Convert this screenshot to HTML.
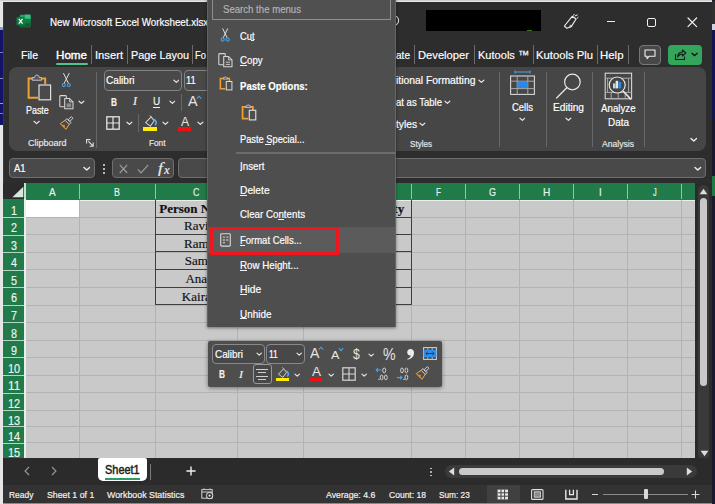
<!DOCTYPE html>
<html><head><meta charset="utf-8"><title>Excel</title>
<style>
html,body{margin:0;padding:0;}
body{width:715px;height:504px;overflow:hidden;position:relative;background:#2b2b2b;font-family:"Liberation Sans",sans-serif;}
#app{position:absolute;left:0;top:0;width:715px;height:504px;overflow:hidden;}
#app div,#app span,#app svg{position:absolute;}
.t{white-space:pre;line-height:1.12;transform-origin:0 50%;-webkit-text-stroke:0.18px currentColor;}
</style></head><body><div id="app">
<div style="left:0px;top:0px;width:715px;height:504px;background:#e6e6e6;"></div>
<div style="left:0px;top:0px;width:715px;height:1.2px;background:#cfcfcf;"></div>
<div style="left:0px;top:26.5px;width:3px;height:4px;background:#8fa0bc;"></div>
<div style="left:0px;top:30px;width:3px;height:95px;background:#12146a;"></div>
<div style="left:0px;top:52px;width:3px;height:1px;background:#7a7fb8;"></div>
<div style="left:0px;top:78px;width:3px;height:1px;background:#8a8fc0;"></div>
<div style="left:0px;top:103px;width:3px;height:1px;background:#9a9fd0;"></div>
<div style="left:0px;top:113px;width:3px;height:1px;background:#7a7fb8;"></div>
<div style="left:711.6px;top:0px;width:3.4px;height:504px;background:#191a2c;"></div>
<div style="left:711.8px;top:1.4px;width:3.2px;height:23px;background:#303030;"></div>
<div style="left:712px;top:24px;width:3px;height:6px;background:#cfd4e4;"></div>
<div style="left:712px;top:30px;width:3px;height:90px;background:#13154f;"></div>
<div style="left:712px;top:176px;width:3px;height:20px;background:#1f7a45;"></div>
<div style="left:2.6px;top:1.6px;width:709.6px;height:502.4px;background:#2d2d2d;"></div>
<div style="left:2.6px;top:1.6px;width:1.6px;height:502.4px;background:#3a3a3a;"></div>
<svg style="left:16px;top:14.2px;" width="15" height="14.4" viewBox="0 0 16 15"><rect x="4" y="0.5" width="11.5" height="13.5" rx="1.5" fill="#21a366"/><rect x="9.5" y="0.5" width="6" height="4.5" fill="#33c481"/><rect x="9.5" y="5" width="6" height="4.5" fill="#107c41"/><rect x="4" y="9.5" width="11.5" height="4.5" fill="#185c37"/><rect x="0.5" y="3" width="9" height="9" rx="1.2" fill="#107c41"/><path d="M3 5 L7 10 M7 5 L3 10" stroke="#fff" stroke-width="1.3"/></svg>
<span class="t" style="left:50.3px;top:16px;line-height:12px;font-size:10.7px;color:#ffffff;transform:scaleX(0.9197);">New Microsoft Excel Worksheet.xlsx</span>
<svg style="left:388px;top:14px;" width="14" height="14" viewBox="0 0 14 14"><circle cx="6" cy="6.5" r="4.6" fill="none" stroke="#ddd" stroke-width="1.1"/></svg>
<div style="left:426px;top:10px;width:115px;height:21px;background:#000000;"></div>
<div style="left:527px;top:30px;width:5px;height:1px;background:#3a7a10;"></div>
<svg style="left:563px;top:14px;" width="16" height="15" viewBox="0 0 16 15"><path d="M9.2 2.3 L13.1 5 L8.4 12.4 L3.8 14.3 L1.4 12 Z" fill="none" stroke="#f0f0f0" stroke-width="1.1" stroke-linejoin="round"/><circle cx="7.6" cy="12.2" r="0.9" fill="none" stroke="#f0f0f0" stroke-width="0.8"/><path d="M12.1 1.9 L14.4 0.9 M14 4.4 L15.1 3.4 M10.6 1.2 L11.2 0.2" stroke="#f0f0f0" stroke-width="1" stroke-linecap="round"/></svg>
<div style="left:606.8px;top:20.6px;width:8.6px;height:1.2px;background:#f0f0f0;"></div>
<div style="left:647px;top:17.5px;width:9px;height:9px;background:transparent;border:1.2px solid #f0f0f0;border-radius:2px;box-sizing:border-box;"></div>
<svg style="left:687px;top:17px;" width="11" height="11" viewBox="0 0 11 11"><path d="M1 1 L9.6 9.6 M9.6 1 L1 9.6" stroke="#f0f0f0" stroke-width="1.2" stroke-linecap="round"/></svg>
<span class="t" style="left:21px;top:48px;line-height:14px;font-size:11.8px;color:#ffffff;transform:scaleX(0.8941);">File</span>
<span class="t" style="left:56px;top:48px;line-height:14px;font-size:11.8px;color:#ffffff;transform:scaleX(0.9849);-webkit-text-stroke:0.4px #fff;">Home</span>
<span class="t" style="left:95px;top:48px;line-height:14px;font-size:11.8px;color:#ffffff;transform:scaleX(0.9488);">Insert</span>
<span class="t" style="left:131px;top:48px;line-height:14px;font-size:11.8px;color:#ffffff;transform:scaleX(0.9208);">Page Layou</span>
<span class="t" style="left:195px;top:48px;line-height:14px;font-size:11.8px;color:#ffffff;transform:scaleX(0.7988);">Fo</span>
<span class="t" style="left:396px;top:48px;line-height:14px;font-size:11.8px;color:#ffffff;transform:scaleX(0.8535);">ate</span>
<span class="t" style="left:418px;top:48px;line-height:14px;font-size:11.8px;color:#ffffff;transform:scaleX(0.9482);">Developer</span>
<span class="t" style="left:478px;top:48px;line-height:14px;font-size:11.8px;color:#ffffff;transform:scaleX(0.9369);">Kutools ™</span>
<span class="t" style="left:536px;top:48px;line-height:14px;font-size:11.8px;color:#ffffff;transform:scaleX(0.9549);">Kutools Plu</span>
<span class="t" style="left:600px;top:48px;line-height:14px;font-size:11.8px;color:#ffffff;transform:scaleX(0.9683);">Help</span>
<div style="left:90.9px;top:45.2px;width:1.2px;height:18.6px;background:#6c6c6c;"></div>
<div style="left:126.9px;top:45.2px;width:1.2px;height:18.6px;background:#6c6c6c;"></div>
<div style="left:191.9px;top:45.2px;width:1.2px;height:18.6px;background:#6c6c6c;"></div>
<div style="left:413.9px;top:45.2px;width:1.2px;height:18.6px;background:#6c6c6c;"></div>
<div style="left:473.9px;top:45.2px;width:1.2px;height:18.6px;background:#6c6c6c;"></div>
<div style="left:532.9px;top:45.2px;width:1.2px;height:18.6px;background:#6c6c6c;"></div>
<div style="left:596.9px;top:45.2px;width:1.2px;height:18.6px;background:#6c6c6c;"></div>
<div style="left:627.9px;top:45.2px;width:1.2px;height:18.6px;background:#6c6c6c;"></div>
<div style="left:55.8px;top:63.2px;width:31.8px;height:2.3px;background:#4dc58c;border-radius:1.2px;"></div>
<div style="left:639px;top:44.5px;width:22px;height:20px;background:#484848;border:1px solid #777;border-radius:4px;box-sizing:border-box;"></div>
<svg style="left:644px;top:49px;" width="12" height="11" viewBox="0 0 12 11"><path d="M1 1 H11 V7.3 H5 L3 9.6 V7.3 H1 Z" fill="none" stroke="#f0f0f0" stroke-width="1.1" stroke-linejoin="round"/></svg>
<div style="left:667.5px;top:44.5px;width:34.5px;height:20px;background:#33a65c;border-radius:4px;"></div>
<svg style="left:674px;top:48px;" width="13" height="13" viewBox="0 0 13 13"><path d="M1.5 6 V11.5 H10.5 V8.5" fill="none" stroke="#1a1a1a" stroke-width="1.1"/><path d="M3.5 9 C4 5.5 6 4 8.5 4 V2 L11.8 5 L8.5 8 V6 C6.5 6 5 6.8 3.5 9 Z" fill="none" stroke="#1a1a1a" stroke-width="1.1" stroke-linejoin="round"/></svg>
<svg style="left:690.9px;top:52.4px;" width="7.2" height="5.2" viewBox="0 0 7.2 5.2"><path d="M1 1.3 L3.6 3.6399999999999997 L6.2 1.3" fill="none" stroke="#1a1a1a" stroke-width="1.4" stroke-linecap="round" stroke-linejoin="round"/></svg>
<div style="left:9px;top:67.4px;width:697px;height:83.4px;background:#464646;border-radius:8px;"></div>
<svg style="left:26px;top:73px;" width="28" height="29" viewBox="0 0 28 29"><path d="M7 5.4 H2.6 V24.8 H12" fill="none" stroke="#f0a030" stroke-width="2"/><path d="M15 5.4 H19.2 V11" fill="none" stroke="#f0a030" stroke-width="2"/><path d="M6.2 7.2 V4.6 H8.6 C8.6 1.2 13.2 1.2 13.2 4.6 H15.6 V7.2 Z" fill="#555" stroke="#c8c8c8" stroke-width="1"/><rect x="13" y="12" width="11.6" height="14.8" fill="#4a4a4a" stroke="#e0e0e0" stroke-width="1.2"/></svg>
<span class="t" style="left:25.9px;top:105px;line-height:11px;font-size:10.1px;color:#ffffff;transform:scaleX(0.8828);">Paste</span>
<svg style="left:33.4px;top:119.9px;" width="7.2" height="5.2" viewBox="0 0 7.2 5.2"><path d="M1 1.3 L3.6 3.6399999999999997 L6.2 1.3" fill="none" stroke="#e6e6e6" stroke-width="1.2" stroke-linecap="round" stroke-linejoin="round"/></svg>
<svg style="left:61px;top:73.4px;" width="11" height="15" viewBox="0 0 11 15"><path d="M2.6 0.5 L7.5 10.4 M8.1 0.5 L3.1 10.4" stroke="#e0e0e0" stroke-width="1" stroke-linecap="round"/><circle cx="2.8" cy="12" r="1.45" fill="none" stroke="#4aa3e8" stroke-width="1.1"/><circle cx="7.8" cy="12" r="1.45" fill="none" stroke="#4aa3e8" stroke-width="1.1"/></svg>
<svg style="left:59px;top:95px;" width="15" height="15" viewBox="0 0 15 15"><path d="M6.4 0.6 H1.7 Q0.8 0.6 0.8 1.5 V10.9 Q0.8 11.8 1.7 11.8 H5.2 M6.4 0.6 Q7.3 0.6 7.3 1.5 V3" fill="none" stroke="#d6d6d6" stroke-width="1.05"/><path d="M5.7 3.5 H10.6 L14 6.9 V13.7 H5.7 Z" fill="#4a4a4a" stroke="#d6d6d6" stroke-width="1.05" stroke-linejoin="round"/><path d="M10.6 3.5 V6.9 H14" fill="none" stroke="#d6d6d6" stroke-width="0.9"/><rect x="7.6" y="8.4" width="4.6" height="3.8" fill="#8c8c8c"/></svg>
<svg style="left:78.19999999999999px;top:100.39999999999999px;" width="6.8" height="4.8" viewBox="0 0 6.8 4.8"><path d="M1 1.2 L3.4 3.36 L5.8 1.2" fill="none" stroke="#e6e6e6" stroke-width="1.2" stroke-linecap="round" stroke-linejoin="round"/></svg>
<svg style="left:60px;top:117.2px;overflow:visible;" width="12.6" height="12.6" viewBox="0 0 14 14"><g transform="rotate(45 7 7)" fill="none" stroke-linejoin="round"><rect x="5.7" y="-2.2" width="2.6" height="5" stroke="#e4e4e4" stroke-width="0.9"/><rect x="3.8" y="2.8" width="6.4" height="2.8" stroke="#e4e4e4" stroke-width="0.9"/><path d="M3.8 5.6 L2.6 12 H11.4 L10.2 5.6" stroke="#f2b544" stroke-width="1"/><path d="M5 12 L7 9.6 L9 12 Z" fill="#f08c1e" stroke="#f08c1e" stroke-width="0.5"/></g></svg>
<span class="t" style="left:28px;top:138px;line-height:10px;font-size:9.1px;color:#e6e6e6;transform:scaleX(0.9910);">Clipboard</span>
<svg style="left:86px;top:139.2px;" width="8" height="8" viewBox="0 0 8 8"><path d="M0.6 4.4 V0.6 H4.4 M2.4 2.4 L7 7 M7.2 3.6 V7.2 H3.6" fill="none" stroke="#dcdcdc" stroke-width="1.1"/></svg>
<div style="left:96px;top:72px;width:1px;height:76px;background:#686868;"></div>
<div style="left:103.5px;top:70.4px;width:78px;height:20.4px;background:#494949;border:1px solid #828282;border-radius:4px;box-sizing:border-box;"></div>
<span class="t" style="left:105.8px;top:75px;line-height:11px;font-size:10.2px;color:#ffffff;transform:scaleX(0.9894);">Calibri</span>
<svg style="left:172.6px;top:78.8px;" width="6.8" height="4.8" viewBox="0 0 6.8 4.8"><path d="M1 1.2 L3.4 3.36 L5.8 1.2" fill="none" stroke="#e6e6e6" stroke-width="1.2" stroke-linecap="round" stroke-linejoin="round"/></svg>
<div style="left:183.8px;top:70.4px;width:40px;height:20.4px;background:#494949;border:1px solid #828282;border-radius:4px;box-sizing:border-box;"></div>
<span class="t" style="left:186px;top:75px;line-height:11px;font-size:10.2px;color:#ffffff;transform:scaleX(0.9255);">11</span>
<span class="t" style="left:110.8px;top:96px;line-height:12px;font-size:11.5px;color:#f0f0f0;font-weight:bold;transform:scaleX(0.7225);">B</span>
<span class="t" style="left:133px;top:95px;line-height:12px;font-size:11.5px;color:#f0f0f0;font-family:'Liberation Serif',serif;font-style:italic;transform:scaleX(1.0445);">I</span>
<span class="t" style="left:152.8px;top:95px;line-height:12px;font-size:11px;color:#f0f0f0;transform:scaleX(0.9064);">U</span>
<div style="left:152.6px;top:107px;width:7.8px;height:1px;background:#f0f0f0;"></div>
<svg style="left:168.6px;top:100.0px;" width="6.8" height="4.8" viewBox="0 0 6.8 4.8"><path d="M1 1.2 L3.4 3.36 L5.8 1.2" fill="none" stroke="#e6e6e6" stroke-width="1.2" stroke-linecap="round" stroke-linejoin="round"/></svg>
<div style="left:181.3px;top:93.5px;width:1px;height:17px;background:#686868;"></div>
<span class="t" style="left:187.6px;top:93px;line-height:16px;font-size:14.8px;color:#e4e4e4;transform:scaleX(0.9725);-webkit-text-stroke:0;">A</span>
<svg style="left:196px;top:95px;" width="6" height="5" viewBox="0 0 6 5"><path d="M0.8 3.6 L3 1.2 L5.2 3.6" fill="none" stroke="#4aa3e8" stroke-width="1.1"/></svg>
<svg style="left:106px;top:116px;" width="14" height="14" viewBox="0 0 14 14"><rect x="0.8" y="0.8" width="12.4" height="12.4" fill="none" stroke="#e6e6e6" stroke-width="1.3"/><path d="M7 1 V13 M1 7 H13" stroke="#e6e6e6" stroke-width="1.2"/></svg>
<svg style="left:125.79999999999998px;top:121.19999999999999px;" width="6.8" height="4.8" viewBox="0 0 6.8 4.8"><path d="M1 1.2 L3.4 3.36 L5.8 1.2" fill="none" stroke="#e6e6e6" stroke-width="1.2" stroke-linecap="round" stroke-linejoin="round"/></svg>
<div style="left:138px;top:114px;width:1px;height:18px;background:#686868;"></div>
<svg style="left:143.5px;top:115px;" width="14" height="12" viewBox="0 0 14 12"><path d="M1.6 7.7 L7.2 1.9 L10.2 5.8 L6.3 11.2 Z" fill="none" stroke="#d4d4d4" stroke-width="1.05" stroke-linejoin="round"/><path d="M7.2 1.9 L5.8 0.4" stroke="#d4d4d4" stroke-width="0.9"/><path d="M10.6 4.6 C12.4 6.2 12.6 8.2 11.4 9.8" fill="none" stroke="#5aaef0" stroke-width="1.5" stroke-linecap="round"/></svg>
<div style="left:143.2px;top:127.2px;width:13.9px;height:3.4px;background:#ffee00;"></div>
<svg style="left:162.2px;top:121.19999999999999px;" width="6.8" height="4.8" viewBox="0 0 6.8 4.8"><path d="M1 1.2 L3.4 3.36 L5.8 1.2" fill="none" stroke="#e6e6e6" stroke-width="1.2" stroke-linecap="round" stroke-linejoin="round"/></svg>
<span class="t" style="left:180.6px;top:115px;line-height:14px;font-size:12.6px;color:#e4e4e4;transform:scaleX(0.9757);-webkit-text-stroke:0;">A</span>
<div style="left:178.4px;top:127.3px;width:13px;height:3.3px;background:#ee1111;"></div>
<svg style="left:197.0px;top:121.19999999999999px;" width="6.8" height="4.8" viewBox="0 0 6.8 4.8"><path d="M1 1.2 L3.4 3.36 L5.8 1.2" fill="none" stroke="#e6e6e6" stroke-width="1.2" stroke-linecap="round" stroke-linejoin="round"/></svg>
<span class="t" style="left:148.7px;top:138px;line-height:10px;font-size:9.1px;color:#e6e6e6;transform:scaleX(0.9061);">Font</span>
<span class="t" style="left:396px;top:75px;line-height:11px;font-size:10.1px;color:#ffffff;transform:scaleX(1.0262);">itional Formatting</span>
<svg style="left:477.90000000000003px;top:78.8px;" width="6.8" height="4.8" viewBox="0 0 6.8 4.8"><path d="M1 1.2 L3.4 3.36 L5.8 1.2" fill="none" stroke="#e6e6e6" stroke-width="1.2" stroke-linecap="round" stroke-linejoin="round"/></svg>
<span class="t" style="left:396px;top:97px;line-height:11px;font-size:10.1px;color:#ffffff;transform:scaleX(0.9452);">at as Table</span>
<svg style="left:443.8px;top:100.19999999999999px;" width="6.8" height="4.8" viewBox="0 0 6.8 4.8"><path d="M1 1.2 L3.4 3.36 L5.8 1.2" fill="none" stroke="#e6e6e6" stroke-width="1.2" stroke-linecap="round" stroke-linejoin="round"/></svg>
<span class="t" style="left:396px;top:119px;line-height:11px;font-size:10.1px;color:#ffffff;transform:scaleX(1.0112);">tyles</span>
<svg style="left:419.20000000000005px;top:122.19999999999999px;" width="6.8" height="4.8" viewBox="0 0 6.8 4.8"><path d="M1 1.2 L3.4 3.36 L5.8 1.2" fill="none" stroke="#e6e6e6" stroke-width="1.2" stroke-linecap="round" stroke-linejoin="round"/></svg>
<span class="t" style="left:410px;top:139px;line-height:10px;font-size:9.1px;color:#e6e6e6;transform:scaleX(0.8878);">Styles</span>
<div style="left:498.6px;top:72px;width:1px;height:75px;background:#686868;"></div>
<svg style="left:509px;top:70px;" width="27" height="26" viewBox="0 0 27 26"><path d="M6 2 H21 M6 0.6 V3.4 M21 0.6 V3.4" stroke="#4aa3e8" stroke-width="1.1"/><rect x="1.6" y="6" width="23.8" height="18.4" fill="none" stroke="#d8d8d8" stroke-width="1.1"/><path d="M1.6 11.2 H25.4 M1.6 18.6 H25.4 M8.2 6 V24.4 M18.8 6 V24.4" stroke="#a8a8a8" stroke-width="1"/><rect x="8.8" y="11.8" width="9.6" height="6.2" fill="#2b88e6"/></svg>
<span class="t" style="left:511.6px;top:102px;line-height:11px;font-size:10.1px;color:#ffffff;transform:scaleX(0.9355);">Cells</span>
<svg style="left:518.6px;top:117.19999999999999px;" width="6.8" height="4.8" viewBox="0 0 6.8 4.8"><path d="M1 1.2 L3.4 3.36 L5.8 1.2" fill="none" stroke="#e6e6e6" stroke-width="1.2" stroke-linecap="round" stroke-linejoin="round"/></svg>
<div style="left:545.8px;top:72px;width:1px;height:75px;background:#686868;"></div>
<svg style="left:555px;top:72px;" width="28" height="28" viewBox="0 0 28 28"><circle cx="17.4" cy="10" r="7.8" fill="none" stroke="#e6e6e6" stroke-width="1.2"/><path d="M11.8 15.8 L1.6 26" stroke="#e6e6e6" stroke-width="1.3" stroke-linecap="round"/></svg>
<span class="t" style="left:553px;top:102px;line-height:11px;font-size:10.1px;color:#ffffff;transform:scaleX(1.0038);">Editing</span>
<svg style="left:565.2px;top:117.19999999999999px;" width="6.8" height="4.8" viewBox="0 0 6.8 4.8"><path d="M1 1.2 L3.4 3.36 L5.8 1.2" fill="none" stroke="#e6e6e6" stroke-width="1.2" stroke-linecap="round" stroke-linejoin="round"/></svg>
<div style="left:592.4px;top:72px;width:1px;height:75px;background:#686868;"></div>
<svg style="left:604px;top:72px;" width="29" height="29" viewBox="0 0 29 29"><rect x="1.2" y="1.2" width="26.4" height="25.6" fill="none" stroke="#d8d8d8" stroke-width="1.1"/><path d="M1.2 6.2 H27.6 M1.2 20.4 H27.6 M7.2 20.4 V26.8 M14.2 20.4 V26.8 M21.2 20.4 V26.8 M3.6 6.2 V20.4 M24.6 6.2 V20.4" stroke="#a8a8a8" stroke-width="1"/><circle cx="13.2" cy="13" r="8" fill="#444" stroke="#e6e6e6" stroke-width="1.2"/><rect x="9" y="11.4" width="2.4" height="5" fill="#cfcfcf"/><rect x="11.6" y="8.8" width="2.6" height="7.6" fill="#e6e6e6"/><rect x="14.4" y="10" width="2.8" height="6.4" fill="#2b88e6"/><path d="M19 19 L27 27.4" stroke="#e6e6e6" stroke-width="1.6"/></svg>
<span class="t" style="left:601px;top:103px;line-height:11px;font-size:10.1px;color:#ffffff;transform:scaleX(0.9629);">Analyze</span>
<span class="t" style="left:608px;top:117px;line-height:11px;font-size:10.1px;color:#ffffff;transform:scaleX(0.9843);">Data</span>
<span class="t" style="left:602px;top:139px;line-height:10px;font-size:9.1px;color:#e6e6e6;transform:scaleX(0.9444);">Analysis</span>
<div style="left:644.4px;top:72px;width:1px;height:75px;background:#686868;"></div>
<svg style="left:689.8000000000001px;top:137.39999999999998px;" width="7.6" height="5.6" viewBox="0 0 7.6 5.6"><path d="M1 1.4 L3.8 3.9199999999999995 L6.6 1.4" fill="none" stroke="#f0f0f0" stroke-width="1.4" stroke-linecap="round" stroke-linejoin="round"/></svg>
<div style="left:9.2px;top:158.2px;width:85.6px;height:20.2px;background:#494949;border:1px solid #6e6e6e;border-radius:4px;box-sizing:border-box;"></div>
<span class="t" style="left:14.4px;top:163px;line-height:11px;font-size:10.4px;color:#ffffff;transform:scaleX(0.9119);">A1</span>
<svg style="left:82.8px;top:166.2px;" width="7.6" height="5.6" viewBox="0 0 7.6 5.6"><path d="M1 1.4 L3.8 3.9199999999999995 L6.6 1.4" fill="none" stroke="#f0f0f0" stroke-width="1.4" stroke-linecap="round" stroke-linejoin="round"/></svg>
<div style="left:102.8px;top:164.4px;width:2px;height:2px;background:#e6e6e6;border-radius:1px;"></div>
<div style="left:102.8px;top:168px;width:2px;height:2px;background:#e6e6e6;border-radius:1px;"></div>
<div style="left:102.8px;top:171.6px;width:2px;height:2px;background:#e6e6e6;border-radius:1px;"></div>
<div style="left:112.4px;top:158.2px;width:62px;height:20.2px;background:#494949;border:1px solid #6e6e6e;border-radius:4px;box-sizing:border-box;"></div>
<svg style="left:118.5px;top:163.5px;" width="9" height="10" viewBox="0 0 9 10"><path d="M0.8 0.8 L8.2 9 M8.2 0.8 L0.8 9" stroke="#9c9c9c" stroke-width="1.15"/></svg>
<svg style="left:137px;top:163.5px;" width="12" height="10" viewBox="0 0 12 10"><path d="M0.8 5.4 L4 8.8 L11.2 0.8" fill="none" stroke="#9c9c9c" stroke-width="1.15"/></svg>
<span class="t" style="left:158.4px;top:160px;line-height:16px;font-size:14.6px;color:#ececec;font-family:'Liberation Serif',serif;font-style:italic;transform:scaleX(1.1833);">f</span>
<span class="t" style="left:164px;top:164px;line-height:13px;font-size:11.6px;color:#ececec;font-family:'Liberation Serif',serif;font-style:italic;transform:scaleX(1.0877);">x</span>
<div style="left:178px;top:158.2px;width:527.6px;height:20.2px;background:#494949;border:1px solid #6e6e6e;border-radius:4px;box-sizing:border-box;"></div>
<svg style="left:694.0px;top:165.6px;" width="7.6" height="5.6" viewBox="0 0 7.6 5.6"><path d="M1 1.4 L3.8 3.9199999999999995 L6.6 1.4" fill="none" stroke="#f0f0f0" stroke-width="1.4" stroke-linecap="round" stroke-linejoin="round"/></svg>
<div style="left:3px;top:183.4px;width:692px;height:274.6px;background:#c9c9c9;"></div>
<div style="left:3px;top:183.4px;width:692px;height:16.2px;background:#217a49;"></div>
<div style="left:26px;top:199.5px;width:669px;height:1.2px;background:#e9f0eb;"></div>
<div style="left:3px;top:199.4px;width:21.4px;height:258.6px;background:#217a49;"></div>
<div style="left:24.3px;top:199.4px;width:1.6px;height:258.6px;background:#e8f0ea;"></div>
<div style="left:3px;top:183.4px;width:21.6px;height:16px;background:#2b2b2b;"></div>
<svg style="left:12px;top:186px;" width="12" height="12" viewBox="0 0 12 12"><path d="M11.3 0.7 V11.2 H0.4 Z" fill="#d3eadd"/></svg>
<div style="left:24.4px;top:183.4px;width:1.4px;height:16px;background:#c9ddd0;"></div>
<span class="t" style="left:49.35px;top:186px;line-height:12px;font-size:11.2px;color:#e8f3ec;transform:scaleX(0.8969);">A</span>
<div style="left:78.9px;top:184.0px;width:1px;height:15.4px;background:#94c4aa;"></div>
<div style="left:78.9px;top:200px;width:1px;height:258px;background:#b3b3b3;"></div>
<span class="t" style="left:114.45px;top:186px;line-height:12px;font-size:11.2px;color:#e8f3ec;transform:scaleX(0.7898);">B</span>
<div style="left:154.9px;top:184.0px;width:1px;height:15.4px;background:#94c4aa;"></div>
<div style="left:154.9px;top:200px;width:1px;height:258px;background:#b3b3b3;"></div>
<span class="t" style="left:193.15000000000003px;top:186px;line-height:12px;font-size:11.2px;color:#e8f3ec;transform:scaleX(0.7913);">C</span>
<div style="left:236.8px;top:184.0px;width:1px;height:15.4px;background:#94c4aa;"></div>
<div style="left:236.8px;top:200px;width:1px;height:258px;background:#b3b3b3;"></div>
<span class="t" style="left:266.79999999999995px;top:186px;line-height:12px;font-size:11.2px;color:#e8f3ec;transform:scaleX(0.8902);">D</span>
<div style="left:303.0px;top:184.0px;width:1px;height:15.4px;background:#94c4aa;"></div>
<div style="left:303.0px;top:200px;width:1px;height:258px;background:#b3b3b3;"></div>
<span class="t" style="left:354.84999999999997px;top:186px;line-height:12px;font-size:11.2px;color:#e8f3ec;transform:scaleX(0.6961);">E</span>
<div style="left:410.9px;top:184.0px;width:1px;height:15.4px;background:#94c4aa;"></div>
<div style="left:410.9px;top:200px;width:1px;height:258px;background:#b3b3b3;"></div>
<span class="t" style="left:435.9px;top:186px;line-height:12px;font-size:11.2px;color:#e8f3ec;transform:scaleX(0.7308);">F</span>
<div style="left:464.9px;top:184.0px;width:1px;height:15.4px;background:#94c4aa;"></div>
<div style="left:464.9px;top:200px;width:1px;height:258px;background:#b3b3b3;"></div>
<span class="t" style="left:488.9px;top:186px;line-height:12px;font-size:11.2px;color:#e8f3ec;transform:scaleX(0.8035);">G</span>
<div style="left:518.9px;top:184.0px;width:1px;height:15.4px;background:#94c4aa;"></div>
<div style="left:518.9px;top:200px;width:1px;height:258px;background:#b3b3b3;"></div>
<span class="t" style="left:542.75px;top:186px;line-height:12px;font-size:11.2px;color:#e8f3ec;transform:scaleX(0.9025);">H</span>
<div style="left:572.9px;top:184.0px;width:1px;height:15.4px;background:#94c4aa;"></div>
<div style="left:572.9px;top:200px;width:1px;height:258px;background:#b3b3b3;"></div>
<span class="t" style="left:599.05px;top:186px;line-height:12px;font-size:11.2px;color:#e8f3ec;transform:scaleX(0.8677);">I</span>
<div style="left:626.9px;top:184.0px;width:1px;height:15.4px;background:#94c4aa;"></div>
<div style="left:626.9px;top:200px;width:1px;height:258px;background:#b3b3b3;"></div>
<span class="t" style="left:652.65px;top:186px;line-height:12px;font-size:11.2px;color:#e8f3ec;transform:scaleX(0.6607);">J</span>
<div style="left:681.1px;top:184.0px;width:1px;height:15.4px;background:#94c4aa;"></div>
<div style="left:681.1px;top:200px;width:1px;height:258px;background:#b3b3b3;"></div>
<div style="left:26px;top:216.5px;width:669px;height:1px;background:#b3b3b3;"></div>
<div style="left:3px;top:216.8px;width:21.2px;height:1.2px;background:#b5d4c1;"></div>
<span class="t" style="left:11.0px;top:204px;line-height:14px;font-size:11.9px;color:#eaf5ee;transform:scaleX(0.9066);">1</span>
<div style="left:26px;top:234.2px;width:669px;height:1px;background:#b3b3b3;"></div>
<div style="left:3px;top:234.5px;width:21.2px;height:1.2px;background:#b5d4c1;"></div>
<span class="t" style="left:11.0px;top:221px;line-height:14px;font-size:11.9px;color:#eaf5ee;transform:scaleX(0.9066);">2</span>
<div style="left:26px;top:251.7px;width:669px;height:1px;background:#b3b3b3;"></div>
<div style="left:3px;top:252.0px;width:21.2px;height:1.2px;background:#b5d4c1;"></div>
<span class="t" style="left:11.0px;top:239px;line-height:14px;font-size:11.9px;color:#eaf5ee;transform:scaleX(0.9066);">3</span>
<div style="left:26px;top:269.3px;width:669px;height:1px;background:#b3b3b3;"></div>
<div style="left:3px;top:269.6px;width:21.2px;height:1.2px;background:#b5d4c1;"></div>
<span class="t" style="left:11.0px;top:256px;line-height:14px;font-size:11.9px;color:#eaf5ee;transform:scaleX(0.9066);">4</span>
<div style="left:26px;top:286.9px;width:669px;height:1px;background:#b3b3b3;"></div>
<div style="left:3px;top:287.2px;width:21.2px;height:1.2px;background:#b5d4c1;"></div>
<span class="t" style="left:11.0px;top:274px;line-height:14px;font-size:11.9px;color:#eaf5ee;transform:scaleX(0.9066);">5</span>
<div style="left:26px;top:304.5px;width:669px;height:1px;background:#b3b3b3;"></div>
<div style="left:3px;top:304.8px;width:21.2px;height:1.2px;background:#b5d4c1;"></div>
<span class="t" style="left:11.0px;top:291px;line-height:14px;font-size:11.9px;color:#eaf5ee;transform:scaleX(0.9066);">6</span>
<div style="left:26px;top:322.0px;width:669px;height:1px;background:#b3b3b3;"></div>
<div style="left:3px;top:322.3px;width:21.2px;height:1.2px;background:#b5d4c1;"></div>
<span class="t" style="left:11.0px;top:309px;line-height:14px;font-size:11.9px;color:#eaf5ee;transform:scaleX(0.9066);">7</span>
<div style="left:26px;top:339.5px;width:669px;height:1px;background:#b3b3b3;"></div>
<div style="left:3px;top:339.8px;width:21.2px;height:1.2px;background:#b5d4c1;"></div>
<span class="t" style="left:11.0px;top:327px;line-height:14px;font-size:11.9px;color:#eaf5ee;transform:scaleX(0.9066);">8</span>
<div style="left:26px;top:357.0px;width:669px;height:1px;background:#b3b3b3;"></div>
<div style="left:3px;top:357.3px;width:21.2px;height:1.2px;background:#b5d4c1;"></div>
<span class="t" style="left:11.0px;top:344px;line-height:14px;font-size:11.9px;color:#eaf5ee;transform:scaleX(0.9066);">9</span>
<div style="left:26px;top:374.7px;width:669px;height:1px;background:#b3b3b3;"></div>
<div style="left:3px;top:375.0px;width:21.2px;height:1.2px;background:#b5d4c1;"></div>
<span class="t" style="left:7.9px;top:362px;line-height:14px;font-size:11.9px;color:#eaf5ee;transform:scaleX(0.9217);">10</span>
<div style="left:26px;top:392.3px;width:669px;height:1px;background:#b3b3b3;"></div>
<div style="left:3px;top:392.6px;width:21.2px;height:1.2px;background:#b5d4c1;"></div>
<span class="t" style="left:7.9px;top:379px;line-height:14px;font-size:11.9px;color:#eaf5ee;transform:scaleX(0.9876);">11</span>
<div style="left:26px;top:409.8px;width:669px;height:1px;background:#b3b3b3;"></div>
<div style="left:3px;top:410.1px;width:21.2px;height:1.2px;background:#b5d4c1;"></div>
<span class="t" style="left:7.9px;top:397px;line-height:14px;font-size:11.9px;color:#eaf5ee;transform:scaleX(0.9217);">12</span>
<div style="left:26px;top:425.9px;width:669px;height:1px;background:#b3b3b3;"></div>
<div style="left:3px;top:426.2px;width:21.2px;height:1.2px;background:#b5d4c1;"></div>
<span class="t" style="left:7.9px;top:414px;line-height:14px;font-size:11.9px;color:#eaf5ee;transform:scaleX(0.9217);">13</span>
<div style="left:26px;top:442.3px;width:669px;height:1px;background:#b3b3b3;"></div>
<div style="left:3px;top:442.6px;width:21.2px;height:1.2px;background:#b5d4c1;"></div>
<span class="t" style="left:7.9px;top:430px;line-height:14px;font-size:11.9px;color:#eaf5ee;transform:scaleX(0.9217);">14</span>
<span class="t" style="left:7.9px;top:446px;line-height:14px;font-size:11.9px;color:#eaf5ee;transform:scaleX(0.9217);">15</span>
<div style="left:26.4px;top:200.4px;width:52.6px;height:16.2px;background:#ffffff;"></div>
<div style="left:155px;top:216.6px;width:256.6px;height:1.2px;background:#3e3e3e;"></div>
<div style="left:155px;top:233.8px;width:256.6px;height:1.2px;background:#3e3e3e;"></div>
<div style="left:155px;top:251.20000000000002px;width:256.6px;height:1.2px;background:#3e3e3e;"></div>
<div style="left:155px;top:268.9px;width:256.6px;height:1.2px;background:#3e3e3e;"></div>
<div style="left:155px;top:286.5px;width:256.6px;height:1.2px;background:#3e3e3e;"></div>
<div style="left:155px;top:304.09999999999997px;width:256.6px;height:1.2px;background:#3e3e3e;"></div>
<div style="left:154.75px;top:200px;width:1.3px;height:105.4px;background:#3e3e3e;"></div>
<div style="left:236.65px;top:200px;width:1.3px;height:105.4px;background:#3e3e3e;"></div>
<div style="left:302.85px;top:200px;width:1.3px;height:105.4px;background:#3e3e3e;"></div>
<div style="left:410.75px;top:200px;width:1.3px;height:105.4px;background:#3e3e3e;"></div>
<span class="t" style="left:159.3px;top:201px;line-height:15px;font-size:13px;color:#111;font-family:'Liberation Serif',serif;font-weight:bold;">Person Name</span>
<span class="t" style="left:354.358px;top:201px;line-height:15px;font-size:13px;color:#111;font-family:'Liberation Serif',serif;font-weight:bold;">Quantity</span>
<span class="t" style="left:184.0236328125px;top:218px;line-height:15px;font-size:13px;color:#111;font-family:'Liberation Serif',serif;">Ravi</span>
<span class="t" style="left:184.0236328125px;top:236px;line-height:15px;font-size:13px;color:#111;font-family:'Liberation Serif',serif;">Ram</span>
<span class="t" style="left:184.74411718750002px;top:253px;line-height:15px;font-size:13px;color:#111;font-family:'Liberation Serif',serif;">Sam</span>
<span class="t" style="left:185.4708984375px;top:271px;line-height:15px;font-size:13px;color:#111;font-family:'Liberation Serif',serif;">Ana</span>
<span class="t" style="left:181.8654296875px;top:289px;line-height:15px;font-size:13px;color:#111;font-family:'Liberation Serif',serif;">Kaira</span>
<div style="left:695px;top:183.4px;width:17px;height:276.6px;background:#2b2b2b;"></div>
<div style="left:698.3px;top:184.6px;width:11.2px;height:275.4px;background:#3a3a3a;border-radius:5.6px;"></div>
<svg style="left:699.4px;top:187.6px;" width="9" height="7" viewBox="0 0 9 7"><path d="M4.5 0.8 L8.4 6.2 H0.6 Z" fill="#dcdcdc"/></svg>
<div style="left:700.2px;top:197.6px;width:7.2px;height:188.2px;background:#c9c9c9;border-radius:3.6px;"></div>
<svg style="left:699.6px;top:449.6px;" width="9" height="7" viewBox="0 0 9 7"><path d="M0.6 0.8 H8.4 L4.5 6.2 Z" fill="#dcdcdc"/></svg>
<div style="left:3px;top:458.4px;width:709px;height:26.4px;background:#2b2b2b;"></div>
<svg style="left:22.6px;top:466.4px;" width="8" height="10" viewBox="0 0 8 10"><path d="M6 1 L2 5 L6 9" fill="none" stroke="#9a9a9a" stroke-width="1.1"/></svg>
<svg style="left:49.6px;top:466.4px;" width="8" height="10" viewBox="0 0 8 10"><path d="M2 1 L6 5 L2 9" fill="none" stroke="#9a9a9a" stroke-width="1.1"/></svg>
<div style="left:98px;top:458.2px;width:49.2px;height:23px;background:#ffffff;border-radius:2px 2px 5px 5px;"></div>
<span class="t" style="left:105px;top:462px;line-height:15px;font-size:13.2px;color:#222;transform:scaleX(0.8294);-webkit-text-stroke:0.5px #222;">Sheet1</span>
<div style="left:105px;top:477.8px;width:34.7px;height:2px;background:#2a9d63;"></div>
<div style="left:150.2px;top:463.6px;width:1px;height:16px;background:#7a7a7a;"></div>
<svg style="left:185.9px;top:465.9px;" width="10" height="10" viewBox="0 0 10 10"><path d="M5 0.4 V9.6 M0.4 5 H9.6" stroke="#f0f0f0" stroke-width="1.4"/></svg>
<div style="left:430.4px;top:467.6px;width:1.5px;height:1.5px;background:#d8d8d8;border-radius:1px;"></div>
<div style="left:430.4px;top:471.2px;width:1.5px;height:1.5px;background:#d8d8d8;border-radius:1px;"></div>
<div style="left:430.4px;top:474.8px;width:1.5px;height:1.5px;background:#d8d8d8;border-radius:1px;"></div>
<div style="left:445.4px;top:464.6px;width:251.2px;height:13.8px;background:#3a3a3a;border-radius:6.9px;"></div>
<svg style="left:448.2px;top:467px;" width="7" height="9" viewBox="0 0 7 9"><path d="M6.2 0.6 V8.4 L0.8 4.5 Z" fill="#dcdcdc"/></svg>
<div style="left:459px;top:467.8px;width:204.6px;height:7.2px;background:#c9c9c9;border-radius:3.6px;"></div>
<svg style="left:686px;top:467px;" width="7" height="9" viewBox="0 0 7 9"><path d="M0.8 0.6 L6.2 4.5 L0.8 8.4 Z" fill="#dcdcdc"/></svg>
<div style="left:3px;top:484.8px;width:709px;height:19.2px;background:#333333;"></div>
<span class="t" style="left:9px;top:490px;line-height:10px;font-size:9.2px;color:#f4f4f4;transform:scaleX(0.9175);">Ready</span>
<span class="t" style="left:46.8px;top:490px;line-height:10px;font-size:9.2px;color:#f4f4f4;transform:scaleX(0.9553);">Sheet 1 of 1</span>
<span class="t" style="left:107px;top:490px;line-height:10px;font-size:9.2px;color:#f4f4f4;transform:scaleX(0.9601);">Workbook Statistics</span>
<svg style="left:201px;top:488px;" width="14" height="12" viewBox="0 0 14 12"><rect x="0.8" y="1.6" width="10.4" height="8.6" fill="none" stroke="#d0d0d0" stroke-width="1"/><path d="M0.8 4 H11.2 M3 1.6 V0.4 M9 1.6 V0.4" stroke="#d0d0d0" stroke-width="1"/><circle cx="8.6" cy="7.6" r="3.2" fill="#333" stroke="#e8e8e8" stroke-width="1"/><circle cx="8.6" cy="7.6" r="1.1" fill="#e8e8e8"/></svg>
<span class="t" style="left:326.4px;top:490px;line-height:10px;font-size:9.2px;color:#f4f4f4;transform:scaleX(0.9500);">Average: 4.6</span>
<span class="t" style="left:388.7px;top:490px;line-height:10px;font-size:9.2px;color:#f4f4f4;transform:scaleX(0.9274);">Count: 18</span>
<span class="t" style="left:439px;top:490px;line-height:10px;font-size:9.2px;color:#f4f4f4;transform:scaleX(0.8990);">Sum: 23</span>
<div style="left:487px;top:485.4px;width:32.6px;height:18.6px;background:#404040;"></div>
<svg style="left:497.4px;top:488.6px;" width="12" height="11" viewBox="0 0 12 11"><rect x="0.6" y="0.6" width="10.4" height="9.8" fill="#e8e8e8"/><path d="M4 0.6 V10.4 M7.6 0.6 V10.4 M0.6 3.8 H11 M0.6 7.2 H11" stroke="#404040" stroke-width="1"/></svg>
<svg style="left:531px;top:488.6px;" width="13" height="11" viewBox="0 0 13 11"><rect x="0.6" y="0.6" width="11.4" height="9.8" rx="1" fill="none" stroke="#e0e0e0" stroke-width="1.1"/><rect x="3.2" y="2.8" width="6.2" height="5.4" fill="#8a8a8a" stroke="#e0e0e0" stroke-width="0.8"/></svg>
<svg style="left:564.6px;top:488.6px;" width="13" height="11" viewBox="0 0 13 11"><path d="M0.8 0.8 V10 H12 V0.8" fill="none" stroke="#e8e8e8" stroke-width="1.4"/><path d="M4.6 0.8 V5.6 H8.4 V0.8" fill="none" stroke="#e8e8e8" stroke-width="1.3"/></svg>
<div style="left:592.4px;top:493.6px;width:6px;height:1.1px;background:#d8d8d8;"></div>
<div style="left:603px;top:493.8px;width:85px;height:1px;background:#8a8a8a;"></div>
<div style="left:644.2px;top:489.4px;width:3.6px;height:10px;background:#d8d8d8;border-radius:1px;"></div>
<svg style="left:690.6px;top:489.6px;" width="9" height="9" viewBox="0 0 9 9"><path d="M4.5 0.6 V8.4 M0.6 4.5 H8.4" stroke="#d8d8d8" stroke-width="1.1"/></svg>
<div style="left:207.3px;top:-2px;width:188.8px;height:328.9px;background:#4e4e4e;border-left:1px solid #636363;border-right:1px solid #666;box-sizing:border-box;box-shadow:0 1px 3px rgba(0,0,0,0.45);"></div>
<div style="left:212px;top:-2px;width:178.8px;height:22.4px;background:#505050;border:1px solid #8e8e8e;box-sizing:border-box;"></div>
<span class="t" style="left:223px;top:3px;line-height:12px;font-size:10.5px;color:#b4b4b4;transform:scaleX(0.9153);">Search the menus</span>
<svg style="left:220px;top:28px;" width="11" height="15" viewBox="0 0 11 15"><path d="M2.8 0.8 L7 9.4 M7.6 0.8 L3.4 9.4" stroke="#e0e0e0" stroke-width="1" stroke-linecap="round"/><circle cx="2.7" cy="11.6" r="1.6" fill="none" stroke="#4aa3e8" stroke-width="1.1"/><circle cx="7.7" cy="11.6" r="1.6" fill="none" stroke="#4aa3e8" stroke-width="1.1"/></svg>
<span class="t" style="left:239.5px;top:30px;line-height:12px;font-size:10.5px;color:#ffffff;transform:scaleX(0.8874);">Cut</span>
<div style="left:250.8px;top:40.3px;width:3px;height:0.8px;background:#f0f0f0;"></div>
<svg style="left:218px;top:52.6px;" width="15" height="15" viewBox="0 0 15 15"><path d="M6.4 0.6 H1.7 Q0.8 0.6 0.8 1.5 V10.9 Q0.8 11.8 1.7 11.8 H5.2 M6.4 0.6 Q7.3 0.6 7.3 1.5 V3" fill="none" stroke="#d6d6d6" stroke-width="1.05"/><path d="M5.7 3.5 H10.6 L14 6.9 V13.7 H5.7 Z" fill="#4e4e4e" stroke="#d6d6d6" stroke-width="1.05" stroke-linejoin="round"/><path d="M10.6 3.5 V6.9 H14" fill="none" stroke="#d6d6d6" stroke-width="0.9"/><path d="M7.8 9.2 H12 M7.8 11.4 H12" stroke="#d6d6d6" stroke-width="0.9"/></svg>
<span class="t" style="left:239.5px;top:54px;line-height:12px;font-size:10.5px;color:#ffffff;transform:scaleX(0.9220);">Copy</span>
<div style="left:239.6px;top:64.9px;width:7px;height:0.8px;background:#f0f0f0;"></div>
<svg style="left:218.6px;top:76.4px;" width="14.7" height="14.7" viewBox="0 0 15 15"><path d="M4.4 2.6 H1.4 V13 H6.4" fill="none" stroke="#f0a030" stroke-width="1.6"/><path d="M8.6 2.6 H10.6 V5.4" fill="none" stroke="#f0a030" stroke-width="1.6"/><path d="M4.2 3.2 V1.8 H5.4 C5.4 0.4 7.6 0.4 7.6 1.8 H8.8 V3.2 Z" fill="#5a5a5a" stroke="#cfcfcf" stroke-width="0.8"/><rect x="7.4" y="5.6" width="5.8" height="8.6" fill="#4e4e4e" stroke="#e0e0e0" stroke-width="1"/></svg>
<span class="t" style="left:240.4px;top:80px;line-height:12px;font-size:10.5px;color:#ffffff;font-weight:bold;transform:scaleX(0.9150);">Paste Options:</span>
<svg style="left:240.6px;top:104px;" width="16.8" height="16.8" viewBox="0 0 15 15"><path d="M4.4 2.6 H1.4 V13 H6.4" fill="none" stroke="#f0a030" stroke-width="1.6"/><path d="M8.6 2.6 H10.6 V5.4" fill="none" stroke="#f0a030" stroke-width="1.6"/><path d="M4.2 3.2 V1.8 H5.4 C5.4 0.4 7.6 0.4 7.6 1.8 H8.8 V3.2 Z" fill="#5a5a5a" stroke="#cfcfcf" stroke-width="0.8"/><rect x="7.4" y="5.6" width="5.8" height="8.6" fill="#4e4e4e" stroke="#e0e0e0" stroke-width="1"/></svg>
<span class="t" style="left:239.5px;top:133px;line-height:12px;font-size:10.5px;color:#ffffff;transform:scaleX(0.8841);">Paste Special...</span>
<div style="left:265.4px;top:144.1px;width:6px;height:0.8px;background:#f0f0f0;"></div>
<div style="left:236px;top:152.2px;width:159.6px;height:1.4px;background:#6c6c6c;"></div>
<span class="t" style="left:239.5px;top:160px;line-height:12px;font-size:10.5px;color:#ffffff;transform:scaleX(0.9292);">Insert</span>
<div style="left:239.6px;top:170.3px;width:2.4px;height:0.8px;background:#f0f0f0;"></div>
<span class="t" style="left:239.5px;top:184px;line-height:12px;font-size:10.5px;color:#ffffff;transform:scaleX(0.9752);">Delete</span>
<div style="left:239.6px;top:194.5px;width:7.4px;height:0.8px;background:#f0f0f0;"></div>
<span class="t" style="left:239.5px;top:208px;line-height:12px;font-size:10.5px;color:#ffffff;transform:scaleX(0.9281);">Clear Contents</span>
<div style="left:277.6px;top:218.7px;width:6px;height:0.8px;background:#f0f0f0;"></div>
<div style="left:208.2px;top:227.2px;width:187.2px;height:26.3px;background:#5b5b5b;"></div>
<div style="left:209.9px;top:226.9px;width:129.4px;height:28.1px;background:transparent;border:3.6px solid #f0161f;box-sizing:border-box;"></div>
<svg style="left:219.5px;top:233px;" width="11" height="14" viewBox="0 0 11 14"><rect x="0.7" y="0.7" width="9.6" height="12.4" rx="0.8" fill="none" stroke="#d8d8d8" stroke-width="1.1"/><path d="M2.8 4.2 H5 M6.2 4.2 H8.4 M2.8 7 H5 M6.2 7 H8.4 M2.8 9.6 H5" stroke="#bdbdbd" stroke-width="1.3"/></svg>
<span class="t" style="left:239.5px;top:234px;line-height:12px;font-size:10.5px;color:#ffffff;transform:scaleX(0.9024);">Format Cells...</span>
<div style="left:239.6px;top:245.1px;width:5.6px;height:0.8px;background:#f0f0f0;"></div>
<span class="t" style="left:239.5px;top:259px;line-height:12px;font-size:10.5px;color:#ffffff;transform:scaleX(0.9298);">Row Height...</span>
<div style="left:239.6px;top:269.5px;width:7.4px;height:0.8px;background:#f0f0f0;"></div>
<span class="t" style="left:239.5px;top:283px;line-height:12px;font-size:10.5px;color:#ffffff;transform:scaleX(0.9817);">Hide</span>
<div style="left:239.6px;top:293.7px;width:7.6px;height:0.8px;background:#f0f0f0;"></div>
<span class="t" style="left:239.5px;top:308px;line-height:12px;font-size:10.5px;color:#ffffff;transform:scaleX(0.9437);">Unhide</span>
<div style="left:239.6px;top:318.3px;width:7.6px;height:0.8px;background:#f0f0f0;"></div>
<div style="left:208px;top:340.6px;width:234px;height:46px;background:#4e4e4e;box-shadow:0 1px 4px rgba(0,0,0,0.45);border-radius:2px;"></div>
<div style="left:212.2px;top:344.2px;width:52.4px;height:19.8px;background:#484848;border:1px solid #8a8a8a;border-radius:4px;box-sizing:border-box;"></div>
<span class="t" style="left:215px;top:349px;line-height:11px;font-size:10.1px;color:#ffffff;transform:scaleX(0.9782);">Calibri</span>
<svg style="left:255.8px;top:352.40000000000003px;" width="6.4" height="4.4" viewBox="0 0 6.4 4.4"><path d="M1 1.1 L3.2 3.08 L5.4 1.1" fill="none" stroke="#e6e6e6" stroke-width="1.2" stroke-linecap="round" stroke-linejoin="round"/></svg>
<div style="left:266px;top:344.2px;width:39px;height:19.8px;background:#484848;border:1px solid #8a8a8a;border-radius:4px;box-sizing:border-box;"></div>
<span class="t" style="left:269.3px;top:349px;line-height:11px;font-size:10.1px;color:#ffffff;transform:scaleX(0.8393);">11</span>
<svg style="left:296.2px;top:352.40000000000003px;" width="6.4" height="4.4" viewBox="0 0 6.4 4.4"><path d="M1 1.1 L3.2 3.08 L5.4 1.1" fill="none" stroke="#e6e6e6" stroke-width="1.2" stroke-linecap="round" stroke-linejoin="round"/></svg>
<span class="t" style="left:310px;top:344px;line-height:17px;font-size:15.2px;color:#e4e4e4;transform:scaleX(0.9272);-webkit-text-stroke:0;">A</span>
<svg style="left:318.2px;top:346.4px;" width="6" height="5" viewBox="0 0 6 5"><path d="M0.8 3.6 L3 1.2 L5.2 3.6" fill="none" stroke="#4aa3e8" stroke-width="1.1"/></svg>
<span class="t" style="left:331px;top:349px;line-height:12px;font-size:11.6px;color:#e4e4e4;transform:scaleX(1.0857);-webkit-text-stroke:0;">A</span>
<svg style="left:338px;top:347.2px;" width="6" height="5" viewBox="0 0 6 5"><path d="M0.8 1.2 L3 3.6 L5.2 1.2" fill="none" stroke="#4aa3e8" stroke-width="1.1"/></svg>
<span class="t" style="left:352.6px;top:346px;line-height:16px;font-size:14.6px;color:#e4e4e4;transform:scaleX(0.8375);-webkit-text-stroke:0;">$</span>
<svg style="left:368.1px;top:352.6px;" width="6.4" height="4.4" viewBox="0 0 6.4 4.4"><path d="M1 1.1 L3.2 3.08 L5.4 1.1" fill="none" stroke="#e6e6e6" stroke-width="1.2" stroke-linecap="round" stroke-linejoin="round"/></svg>
<span class="t" style="left:383px;top:346px;line-height:17px;font-size:16px;color:#e4e4e4;transform:scaleX(0.8857);-webkit-text-stroke:0;">%</span>
<svg style="left:405.6px;top:347.6px;" width="9" height="13" viewBox="0 0 9 13"><path d="M4.4 1 C6.6 1 8 2.6 8 5 C8 8.4 5.6 10.8 1.6 11.8 L1.4 10.8 C3.6 10 4.8 8.8 5 7.2 C4.8 7.3 4.4 7.4 4 7.4 C2.4 7.4 1.2 6 1.2 4.2 C1.2 2.4 2.6 1 4.4 1 Z" fill="#ececec"/></svg>
<svg style="left:422.6px;top:347px;" width="14" height="13" viewBox="0 0 14 13"><rect x="0.6" y="0.6" width="12.8" height="11.8" fill="none" stroke="#d6d6d6" stroke-width="1"/><path d="M4.8 0.6 V3 M9.2 0.6 V3 M4.8 10 V12.4 M9.2 10 V12.4" stroke="#bdbdbd" stroke-width="0.9"/><rect x="0.6" y="3" width="12.8" height="7" fill="#2b90f0"/><path d="M3 6.5 H11 M4.6 4.8 L2.8 6.5 L4.6 8.2 M9.4 4.8 L11.2 6.5 L9.4 8.2" fill="none" stroke="#3a3a3a" stroke-width="1"/></svg>
<span class="t" style="left:219px;top:368px;line-height:12px;font-size:11.4px;color:#f0f0f0;font-weight:bold;transform:scaleX(0.7288);">B</span>
<span class="t" style="left:239.4px;top:368px;line-height:12px;font-size:11.4px;color:#f0f0f0;font-family:'Liberation Serif',serif;font-style:italic;transform:scaleX(1.0536);">I</span>
<div style="left:252.8px;top:364.4px;width:19px;height:20px;background:#484848;border:1px solid #9a9a9a;border-radius:3px;box-sizing:border-box;"></div>
<div style="left:256.3px;top:368.6px;width:12px;height:1.1px;background:#cfcfcf;"></div>
<div style="left:258.3px;top:372.2px;width:8px;height:1.1px;background:#cfcfcf;"></div>
<div style="left:256.3px;top:375.8px;width:12px;height:1.1px;background:#cfcfcf;"></div>
<div style="left:258.3px;top:379.4px;width:8px;height:1.1px;background:#cfcfcf;"></div>
<svg style="left:276.6px;top:366.6px;" width="13" height="11.2" viewBox="0 0 14 12"><path d="M1.6 7.7 L7.2 1.9 L10.2 5.8 L6.3 11.2 Z" fill="none" stroke="#d4d4d4" stroke-width="1.05" stroke-linejoin="round"/><path d="M7.2 1.9 L5.8 0.4" stroke="#d4d4d4" stroke-width="0.9"/><path d="M10.6 4.6 C12.4 6.2 12.6 8.2 11.4 9.8" fill="none" stroke="#5aaef0" stroke-width="1.5" stroke-linecap="round"/></svg>
<div style="left:275.8px;top:378px;width:13.2px;height:3.1px;background:#ffee00;"></div>
<svg style="left:294.40000000000003px;top:372.6px;" width="6.4" height="4.4" viewBox="0 0 6.4 4.4"><path d="M1 1.1 L3.2 3.08 L5.4 1.1" fill="none" stroke="#e6e6e6" stroke-width="1.2" stroke-linecap="round" stroke-linejoin="round"/></svg>
<span class="t" style="left:311.6px;top:365px;line-height:14px;font-size:12.4px;color:#e4e4e4;transform:scaleX(1.0882);-webkit-text-stroke:0;">A</span>
<div style="left:308.8px;top:378px;width:13.6px;height:3.1px;background:#ee1111;"></div>
<svg style="left:327.8px;top:372.6px;" width="6.4" height="4.4" viewBox="0 0 6.4 4.4"><path d="M1 1.1 L3.2 3.08 L5.4 1.1" fill="none" stroke="#e6e6e6" stroke-width="1.2" stroke-linecap="round" stroke-linejoin="round"/></svg>
<svg style="left:342px;top:367.4px;" width="14" height="14" viewBox="0 0 14 14"><rect x="0.8" y="0.8" width="12.4" height="12.4" fill="none" stroke="#d8d8d8" stroke-width="1.2"/><path d="M7 1 V13 M1 7 H13" stroke="#d8d8d8" stroke-width="1.1"/></svg>
<svg style="left:360.6px;top:372.6px;" width="6.4" height="4.4" viewBox="0 0 6.4 4.4"><path d="M1 1.1 L3.2 3.08 L5.4 1.1" fill="none" stroke="#e6e6e6" stroke-width="1.2" stroke-linecap="round" stroke-linejoin="round"/></svg>
<svg style="left:374.8px;top:367.4px;" width="13" height="14" viewBox="0 0 13 14"><path d="M6.4 3 H1.2 M3 1.2 L1.2 3 L3 4.8" fill="none" stroke="#4aa3e8" stroke-width="1.1"/><ellipse cx="9.2" cy="3.4" rx="1.5" ry="2.4" fill="none" stroke="#dcdcdc" stroke-width="0.9"/><ellipse cx="6.6" cy="10.4" rx="1.4" ry="2.4" fill="none" stroke="#dcdcdc" stroke-width="0.9"/><ellipse cx="10.8" cy="10.4" rx="1.4" ry="2.4" fill="none" stroke="#dcdcdc" stroke-width="0.9"/><rect x="3.4" y="11.8" width="1.2" height="1.2" fill="#dcdcdc"/></svg>
<svg style="left:395.6px;top:367.4px;" width="13" height="14" viewBox="0 0 13 14"><path d="M0.8 10.6 H6 M4.2 8.8 L6 10.6 L4.2 12.4" fill="none" stroke="#4aa3e8" stroke-width="1.1"/><ellipse cx="6" cy="3.4" rx="1.4" ry="2.4" fill="none" stroke="#dcdcdc" stroke-width="0.9"/><ellipse cx="10.4" cy="3.4" rx="1.4" ry="2.4" fill="none" stroke="#dcdcdc" stroke-width="0.9"/><ellipse cx="10.4" cy="10.4" rx="1.4" ry="2.4" fill="none" stroke="#dcdcdc" stroke-width="0.9"/><rect x="7.4" y="11.8" width="1.2" height="1.2" fill="#dcdcdc"/></svg>
<svg style="left:416px;top:367.2px;overflow:visible;" width="12.6" height="12.6" viewBox="0 0 14 14"><g transform="rotate(45 7 7)" fill="none" stroke-linejoin="round"><rect x="5.7" y="-2.2" width="2.6" height="5" stroke="#e4e4e4" stroke-width="0.9"/><rect x="3.8" y="2.8" width="6.4" height="2.8" stroke="#e4e4e4" stroke-width="0.9"/><path d="M3.8 5.6 L2.6 12 H11.4 L10.2 5.6" stroke="#f2b544" stroke-width="1"/><path d="M5 12 L7 9.6 L9 12 Z" fill="#f08c1e" stroke="#f08c1e" stroke-width="0.5"/></g></svg>
<div style="left:3px;top:503px;width:709px;height:1px;background:#8a8a8a;"></div>
</div></body></html>
